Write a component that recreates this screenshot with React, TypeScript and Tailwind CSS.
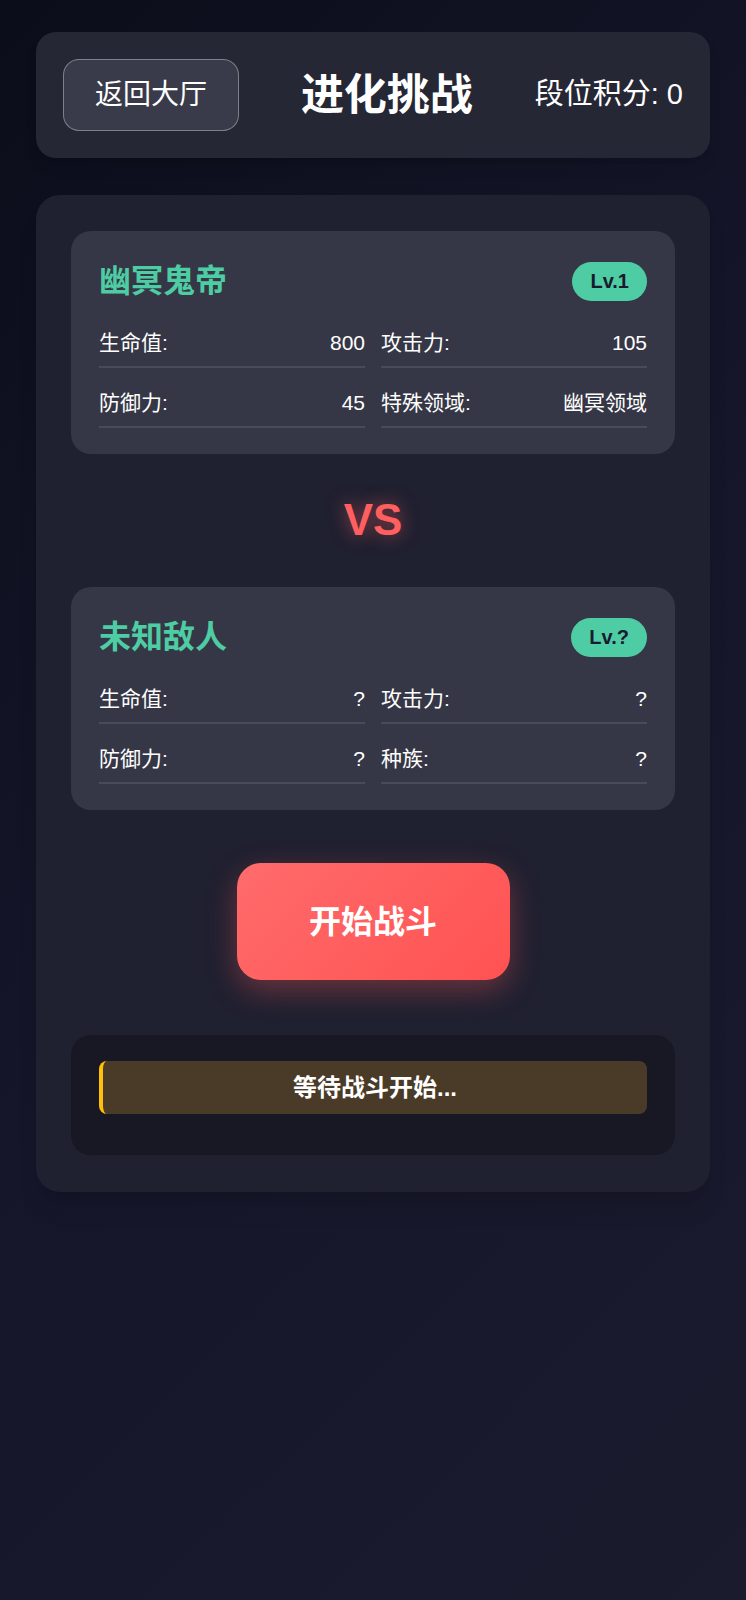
import React from 'react';

type Stat = { label: string; value: string };

interface FighterCardProps {
  name: string;
  level: string;
  stats: Stat[];
}

function FighterCard({ name, level, stats }: FighterCardProps) {
  return (
    <div className="rounded-[20px] bg-[#363746] px-7 py-[26px]">
      <div className="flex items-center justify-between">
        <h2 className="text-[32px] font-bold leading-[48px] text-[#4ecca3]">{name}</h2>
        <span className="flex h-[39px] items-center rounded-full bg-[#4ecca3] px-[18px] text-[20px] font-bold text-[#1a1a2e]">
          {level}
        </span>
      </div>
      <div className="mt-[14px] grid grid-cols-2 gap-x-4 gap-y-[11px]">
        {stats.map((s) => (
          <div
            key={s.label}
            className="flex items-center justify-between border-b-2 border-white/10 py-2 text-[21px] leading-[31px] text-white"
          >
            <span>{s.label}</span>
            <span>{s.value}</span>
          </div>
        ))}
      </div>
    </div>
  );
}

export default function App() {
  return (
    <div
      className="min-h-screen bg-[linear-gradient(135deg,#0c0d1a_0%,#15162a_50%,#1b1b2e_100%)] px-[36px] pt-[32px] pb-10"
      style={{ fontFamily: '"Liberation Sans", "Noto Sans CJK SC", sans-serif' }}
    >
      <header className="flex h-[126px] items-center justify-between rounded-[20px] bg-[#262735] px-[27px] shadow-lg">
        <button className="h-[72px] w-[176px] rounded-[16px] border-[1.5px] border-white/35 bg-[#3a3b4a] text-[28px] text-white">
          返回大厅
        </button>
        <h1 className="text-[43px] font-bold leading-none text-white">进化挑战</h1>
        <span className="text-[29px] text-white">段位积分: 0</span>
      </header>

      <main className="mt-[37px] rounded-[24px] bg-[#1f2030] px-[35px] pt-[36px] pb-[37px] shadow-xl">
        <FighterCard
          name="幽冥鬼帝"
          level="Lv.1"
          stats={[
            { label: '生命值:', value: '800' },
            { label: '攻击力:', value: '105' },
            { label: '防御力:', value: '45' },
            { label: '特殊领域:', value: '幽冥领域' },
          ]}
        />

        <div className="mt-[39px] mb-[40px] text-center text-[44px] font-bold leading-[54px] text-[#ff5f5f] [text-shadow:0_0_18px_rgba(255,95,95,0.6)]">
          VS
        </div>

        <FighterCard
          name="未知敌人"
          level="Lv.?"
          stats={[
            { label: '生命值:', value: '?' },
            { label: '攻击力:', value: '?' },
            { label: '防御力:', value: '?' },
            { label: '种族:', value: '?' },
          ]}
        />

        <div className="mt-[53px] flex justify-center">
          <button className="h-[117px] w-[273px] rounded-[24px] bg-[linear-gradient(135deg,#ff6b6b_0%,#ff5252_100%)] text-[32px] font-bold text-white shadow-[0_10px_30px_rgba(255,90,90,0.35)]">
            开始战斗
          </button>
        </div>

        <div className="mt-[55px] rounded-[20px] bg-[#171824] px-7 pt-[26px] pb-[41px]">
          <div className="flex h-[53px] items-center justify-center rounded-[8px] border-l-4 border-[#ffc107] bg-[#4a3b28] text-[24px] font-bold text-white">
            等待战斗开始...
          </div>
        </div>
      </main>
    </div>
  );
}
